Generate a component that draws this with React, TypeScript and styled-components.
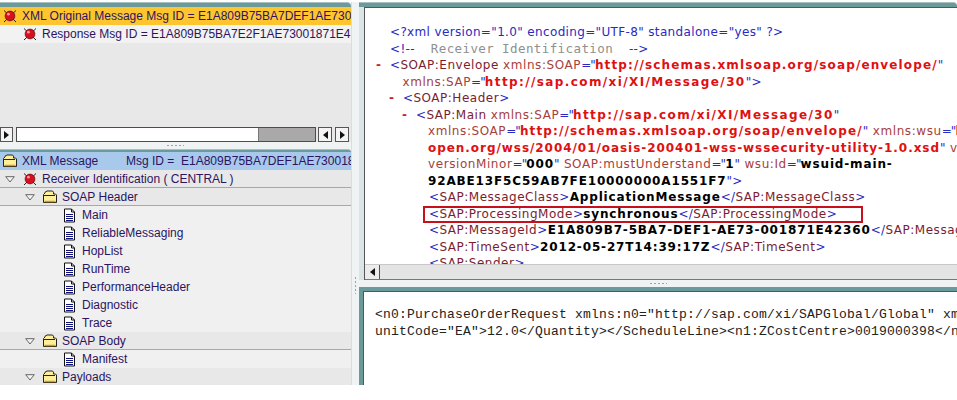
import React from "react";
import styled, { createGlobalStyle } from "styled-components";

const Global = createGlobalStyle`
  html, body { margin: 0; padding: 0; background: #fff; }
  #root { width: 957px; height: 400px; overflow: hidden; }
`;

const Page = styled.div`
  display: grid;
  grid-template-columns: 351px 8px 598px;
  height: 383px;
  padding-top: 2px;
  background: #fff;
`;

const LeftColumn = styled.div`
  display: flex;
  flex-direction: column;
  min-width: 0;
  height: 383px;
`;

const Bar = styled.div<{ $h?: number }>`
  flex: none;
  height: ${(p) => p.$h ?? 5}px;
  background: #6b9a9c;
  border-top: 1px solid #a9c0c0;
  border-radius: 0 4px 0 0;
  box-sizing: border-box;
`;

const TopList = styled.div`
  flex: none;
  height: 119px;
  background: #e8e8e8;
  overflow: hidden;
`;

const TreeList = styled.div`
  flex: 1;
  min-height: 0;
  overflow: hidden;
  background: #f0f0f0;
`;

const Row = styled.div<{ $bg?: string; $line?: boolean; $pad: number }>`
  display: flex;
  align-items: center;
  height: 18px;
  box-sizing: border-box;
  padding-left: ${(p) => p.$pad}px;
  padding-top: ${(p) => (p.$line ? "1px" : "0")};
  background: ${(p) => p.$bg ?? "#f0f0f0"};
  border-bottom: ${(p) => (p.$line ? "1px solid #a8a8a8" : "none")};
  font: 12px/17px "Liberation Sans", Arial, sans-serif;
  color: #2c1460;
  white-space: nowrap;
  overflow: hidden;
`;

const Slot = styled.span<{ $w: number }>`
  flex: none;
  width: ${(p) => p.$w}px;
  display: flex;
  align-items: center;
`;

const Scroller = styled.div`
  flex: none;
  display: flex;
  align-items: stretch;
  height: 15px;
  gap: 3px;
  padding: 1px 2px 0 0;
  background: #e8e8e8;
`;

const ArrowBtn = styled.div<{ $w?: number }>`
  flex: none;
  width: ${(p) => p.$w ?? 14}px;
  box-sizing: border-box;
  border: 1px solid #555;
  background: #f4f4f4;
  display: flex;
  align-items: center;
  justify-content: center;
`;

const Track = styled.div`
  flex: 1;
  display: flex;
  margin-right: -1px;
  border: 1px solid #4c4c4c;
  background: #fff;
`;

const Thumb = styled.div`
  margin-left: auto;
  width: 56px;
  background: #a9a9a9;
  border-left: 1px solid #777;
`;

const HSplit = styled.div`
  flex: none;
  height: 7px;
  background: #f0f3f3;
  display: flex;
  align-items: center;
  justify-content: center;
`;

const Dots = styled.span<{ $v?: boolean }>`
  display: block;
  width: ${(p) => (p.$v ? "1px" : "17px")};
  height: ${(p) => (p.$v ? "17px" : "1px")};
  background: repeating-linear-gradient(
    ${(p) => (p.$v ? "180deg" : "90deg")},
    #9aa5a5 0 2px,
    transparent 2px 4px
  );
`;

const VSplit = styled.div`
  height: 383px;
  background: #f0f3f3;
  display: flex;
  align-items: center;
  justify-content: center;
  padding-top: 183px;
  box-sizing: border-box;
  border-left: 1px solid #d8dede;
`;

const RightColumn = styled.div`
  display: flex;
  flex-direction: column;
  height: 383px;
  min-width: 0;
`;

const TopFrame = styled.div`
  flex: none;
  display: flex;
  flex-direction: column;
  background: #dbe5e5;
`;

const TopBody = styled.div`
  padding-left: 5px;
`;

const BottomFrame = styled.div`
  flex: 1;
  min-height: 0;
  padding: 4px 0 0 4px;
  background: #6b9a9c;
`;

const Pane = styled.div<{ $h: number }>`
  height: ${(p) => p.$h}px;
  background: #fff;
  border-left: 1px solid #555;
  border-top: 1px solid #555;
  box-sizing: border-box;
  overflow: hidden;
`;

const Xml = styled.div`
  padding-top: 16px;
  font: 12px/16.5px "DejaVu Sans", Verdana, sans-serif;
  letter-spacing: 0.35px;
  height: 256px;
  box-sizing: border-box;
  overflow: hidden;
`;

const Line = styled.div<{ $indent: number }>`
  position: relative;
  padding-left: ${(p) => p.$indent}px;
  white-space: nowrap;
  height: 16.5px;
`;

const Minus = styled.span<{ $at: number }>`
  position: absolute;
  left: ${(p) => p.$at}px;
  top: 0;
  color: #c8201c;
  font-weight: bold;
`;

const B = styled.span`
  color: #2a2ac0;
`;
const Eq = styled.span`
  color: #2a2ac0;
  letter-spacing: -0.9px;
`;
const Tag = styled.span`
  color: #7c1c30;
  letter-spacing: 0.52px;
`;
const Attr = styled.span`
  color: #a8403a;
  letter-spacing: 0.58px;
`;
const Url = styled.span<{ $sp: number }>`
  color: #e01010;
  font-weight: bold;
  letter-spacing: ${(p) => p.$sp}px;
`;
const Val = styled.span`
  color: #000;
  font-weight: bold;
  letter-spacing: 0.85px;
`;
const Comment = styled.span`
  color: #8f8f8f;
  font-family: "DejaVu Sans Mono", monospace;
  font-size: 12.5px;
  letter-spacing: 0.4px;
`;

const RedBox = styled.span`
  position: absolute;
  left: 58px;
  top: 0;
  width: 440px;
  height: 17px;
  border: 2px solid #c8101c;
  box-sizing: border-box;
`;

const PaneScroll = styled.div`
  display: flex;
  height: 16px;
  background: #e4e4e4;
  border-top: 1px solid #c8c8c8;
  border-bottom: 1px solid #777;
  box-sizing: border-box;
`;

const PaneArrow = styled(ArrowBtn)`
  background: #ececec;
  border-width: 0 1px 0 0;
`;

const Raw = styled.div`
  padding: 15px 0 0 11px;
  font: 13px/16.5px "Liberation Mono", "Courier New", monospace;
  letter-spacing: 0.2px;
  color: #222;
  white-space: nowrap;
  overflow: hidden;
`;

const RedBall = () => (
  <svg width="14" height="14" viewBox="0 0 14 14">
    <path d="M1 1.5L13 13M13 1.5L1 13" stroke="#222" strokeWidth="1" />
    <circle cx="7" cy="7" r="4.9" fill="#d80f1e" stroke="#5a1010" strokeWidth="0.7" />
    <circle cx="5.4" cy="5.2" r="1.4" fill="#f59a9a" />
  </svg>
);

const Folder = () => (
  <svg width="16" height="14" viewBox="0 0 16 14">
    <path d="M1.5 12.5V4.5L3 3V2.2L5 1h5.5l1 1.2V4h2l1 1v7.5z" fill="#ffef9a" stroke="#222" strokeWidth="1" />
    <path d="M2 5.5h11" stroke="#222" strokeWidth="1" />
    <path d="M2.5 11.5h11" stroke="#c9a020" strokeWidth="1.5" />
  </svg>
);

const Doc = () => (
  <svg width="13" height="15" viewBox="0 0 13 15">
    <path d="M1.5 1h7l3 3v10h-10z" fill="#fff" stroke="#111" strokeWidth="1" />
    <path d="M8.5 1v3h3" fill="none" stroke="#111" strokeWidth="1" />
    <path d="M3 6.5h7M3 8.5h7M3 10.5h7M3 12.5h7" stroke="#11117a" strokeWidth="1" />
  </svg>
);

const Tri = () => (
  <svg width="10" height="7" viewBox="0 0 10 7">
    <path d="M0.7 0.7h8.6L5 6z" fill="#f4f4f4" stroke="#666" strokeWidth="1" />
  </svg>
);

const Arrow = ({ left }: { left?: boolean }) => (
  <svg width="5" height="8" viewBox="0 0 5 8">
    <path d={left ? "M5 0V8L0 4z" : "M0 0V8L5 4z"} fill="#111" />
  </svg>
);

const leaves1 = ["Main", "ReliableMessaging", "HopList", "RunTime", "PerformanceHeader", "Diagnostic", "Trace"];

const Leaf = ({ label }: { label: string }) => (
  <Row $pad={63}>
    <Slot $w={19}>
      <Doc />
    </Slot>
    {label}
  </Row>
);

const Group = ({ label, line }: { label: string; line?: boolean }) => (
  <Row $pad={25} $bg="#e8e8e8" $line={line}>
    <Slot $w={17}>
      <Tri />
    </Slot>
    <Slot $w={20}>
      <Folder />
    </Slot>
    {label}
  </Row>
);

export default function App() {
  return (
    <>
      <Global />
      <Page>
        <LeftColumn>
          <Bar />
          <TopList>
            <Row $pad={3} $bg="#ffc52e">
              <Slot $w={19}>
                <RedBall />
              </Slot>
              XML Original Message Msg ID = E1A809B75BA7DEF1AE730
            </Row>
            <Row $pad={23} $bg="#f2f2f2">
              <Slot $w={19}>
                <RedBall />
              </Slot>
              Response Msg ID = E1A809B75BA7E2F1AE73001871E4
            </Row>
          </TopList>
          <Scroller>
            <ArrowBtn $w={13}>
              <Arrow />
            </ArrowBtn>
            <Track>
              <Thumb />
            </Track>
            <ArrowBtn>
              <Arrow left />
            </ArrowBtn>
            <ArrowBtn>
              <Arrow />
            </ArrowBtn>
          </Scroller>
          <HSplit>
            <Dots />
          </HSplit>
          <Bar $h={3} />
          <TreeList>
            <Row $pad={2} $bg="#a8c9ec">
              <Slot $w={20}>
                <Folder />
              </Slot>
              <Slot $w={104}>XML Message</Slot>
              Msg ID =&nbsp; E1A809B75BA7DEF1AE730018
            </Row>
            <Row $pad={5} $bg="#e8e8e8" $line>
              <Slot $w={18}>
                <Tri />
              </Slot>
              <Slot $w={19}>
                <RedBall />
              </Slot>
              Receiver Identification ( CENTRAL )
            </Row>
            <Group label="SOAP Header" line />
            {leaves1.map((l) => (
              <Leaf key={l} label={l} />
            ))}
            <Group label="SOAP Body" line />
            <Leaf label="Manifest" />
            <Group label="Payloads" />
          </TreeList>
        </LeftColumn>
        <VSplit>
          <Dots $v />
        </VSplit>
        <RightColumn>
          <Bar />
          <TopFrame>
            <TopBody>
              <Pane $h={273}>
                <Xml>
                  <Line $indent={25}>
                    <B>&lt;?xml version="1.0" encoding="UTF-8" standalone="yes" ?&gt;</B>
                  </Line>
                  <Line $indent={25}>
                    <B>&lt;!--</B>
                    <Comment>&nbsp; Receiver Identification &nbsp;</Comment>
                    <B>--&gt;</B>
                  </Line>
                  <Line $indent={25}>
                    <Minus $at={11}>-</Minus>
                    <B>&lt;</B>
                    <Tag>SOAP:Envelope</Tag> <Attr>xmlns:SOAP</Attr>
                    <Eq>="</Eq>
                    <Url $sp={1.14}>http://schemas.xmlsoap.org/soap/envelope/</Url>
                    <B>"</B>
                  </Line>
                  <Line $indent={37.5}>
                    <Attr>xmlns:SAP</Attr>
                    <Eq>="</Eq>
                    <Url $sp={1.4}>http://sap.com/xi/XI/Message/30</Url>
                    <B>"&gt;</B>
                  </Line>
                  <Line $indent={38}>
                    <Minus $at={24}>-</Minus>
                    <B>&lt;</B>
                    <Tag>SOAP:Header</Tag>
                    <B>&gt;</B>
                  </Line>
                  <Line $indent={51}>
                    <Minus $at={37}>-</Minus>
                    <B>&lt;</B>
                    <Tag>SAP:Main</Tag> <Attr>xmlns:SAP</Attr>
                    <Eq>="</Eq>
                    <Url $sp={1.4}>http://sap.com/xi/XI/Message/30</Url>
                    <B>"</B>
                  </Line>
                  <Line $indent={63}>
                    <Attr>xmlns:SOAP</Attr>
                    <Eq>="</Eq>
                    <Url $sp={1.14}>http://schemas.xmlsoap.org/soap/envelope/</Url>
                    <B>"</B> <Attr>xmlns:wsu</Attr>
                    <Eq>="</Eq>
                    <Url $sp={1.14}>http</Url>
                  </Line>
                  <Line $indent={63}>
                    <Url $sp={0.95}>open.org/wss/2004/01/oasis-200401-wss-wssecurity-utility-1.0.xsd</Url>
                    <B>"</B> <Attr>v</Attr>
                  </Line>
                  <Line $indent={63}>
                    <Attr>versionMinor</Attr>
                    <Eq>="</Eq>
                    <Val>000</Val>
                    <B>"</B> <Attr>SOAP:mustUnderstand</Attr>
                    <Eq>="</Eq>
                    <Val>1</Val>
                    <B>"</B> <Attr>wsu:Id</Attr>
                    <Eq>="</Eq>
                    <Val>wsuid-main-</Val>
                  </Line>
                  <Line $indent={63}>
                    <Val>92ABE13F5C59AB7FE10000000A1551F7</Val>
                    <B>"&gt;</B>
                  </Line>
                  <Line $indent={64}>
                    <B>&lt;</B>
                    <Tag>SAP:MessageClass</Tag>
                    <B>&gt;</B>
                    <Val>ApplicationMessage</Val>
                    <B>&lt;/</B>
                    <Tag>SAP:MessageClass</Tag>
                    <B>&gt;</B>
                  </Line>
                  <Line $indent={64}>
                    <RedBox />
                    <B>&lt;</B>
                    <Tag>SAP:ProcessingMode</Tag>
                    <B>&gt;</B>
                    <Val>synchronous</Val>
                    <B>&lt;/</B>
                    <Tag>SAP:ProcessingMode</Tag>
                    <B>&gt;</B>
                  </Line>
                  <Line $indent={64}>
                    <B>&lt;</B>
                    <Tag>SAP:MessageId</Tag>
                    <B>&gt;</B>
                    <Val>E1A809B7-5BA7-DEF1-AE73-001871E42360</Val>
                    <B>&lt;/</B>
                    <Tag>SAP:MessageId</Tag>
                    <B>&gt;</B>
                  </Line>
                  <Line $indent={64}>
                    <B>&lt;</B>
                    <Tag>SAP:TimeSent</Tag>
                    <B>&gt;</B>
                    <Val>2012-05-27T14:39:17Z</Val>
                    <B>&lt;/</B>
                    <Tag>SAP:TimeSent</Tag>
                    <B>&gt;</B>
                  </Line>
                  <Line $indent={64}>
                    <B>&lt;</B>
                    <Tag>SAP:Sender</Tag>
                    <B>&gt;</B>
                  </Line>
                </Xml>
                <PaneScroll>
                  <PaneArrow $w={15}>
                    <Arrow left />
                  </PaneArrow>
                </PaneScroll>
              </Pane>
            </TopBody>
            <HSplit>
              <Dots />
            </HSplit>
          </TopFrame>
          <BottomFrame>
            <Pane $h={94}>
              <Raw>
                &lt;n0:PurchaseOrderRequest xmlns:n0="http://sap.com/xi/SAPGlobal/Global" xmlns:n1="urn"
                <br />
                unitCode="EA"&gt;12.0&lt;/Quantity&gt;&lt;/ScheduleLine&gt;&lt;n1:ZCostCentre&gt;0019000398&lt;/n1:ZCostCentre&gt;
              </Raw>
            </Pane>
          </BottomFrame>
        </RightColumn>
      </Page>
    </>
  );
}
